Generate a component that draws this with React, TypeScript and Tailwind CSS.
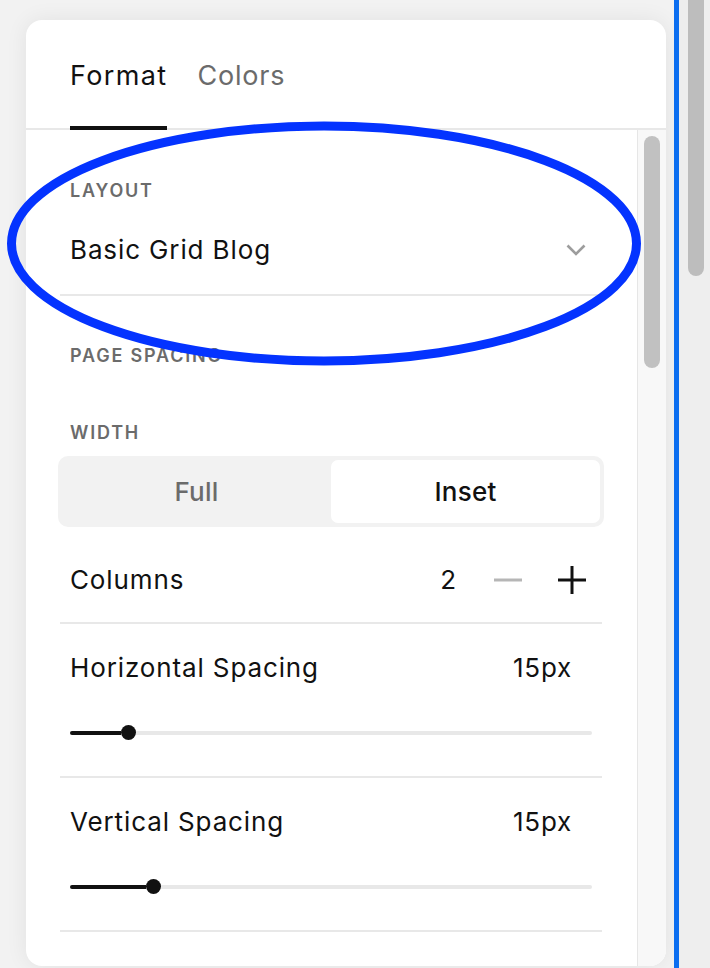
import React from "react";

function Label({ children, className = "" }: { children: React.ReactNode; className?: string }) {
  return (
    <div className={`px-[10px] text-[18px] leading-none font-semibold tracking-[0.1em] text-[#6b6b6b] ${className}`}>
      {children}
    </div>
  );
}

function Slider({ fill }: { fill: number }) {
  return (
    <div className="mt-[44px] px-[10px] flex items-center h-[15px]">
      <div className="h-[4px] bg-[#111] rounded-l-full" style={{ width: fill }} />
      <div className="w-[15px] h-[15px] rounded-full bg-[#111] flex-none" />
      <div className="h-[4px] flex-1 bg-[#e8e8e8] rounded-r-full" />
    </div>
  );
}

function SpacingSection({ title, value, fill }: { title: string; value: string; fill: number }) {
  return (
    <div className="pt-[31px] pb-[36px] border-b-2 border-[#e8e8e8]">
      <div className="px-[10px] flex items-center justify-between">
        <span className="text-[26px] leading-none text-[#111]">{title}</span>
        <span className="text-[26px] leading-none text-[#111] mr-[20px] tracking-[0.03em]">{value}</span>
      </div>
      <Slider fill={fill} />
    </div>
  );
}

export default function App() {
  return (
    <div className="w-[710px] h-[968px] bg-black overflow-hidden relative font-['Inter','Noto_Sans',sans-serif] tracking-[0.055em]">
      <div className="w-full h-full bg-[#f2f2f2] rounded-br-[22px] flex">
        <div className="pl-[26px] pt-[20px] flex-none">
          <div className="w-[640px] h-[946px] bg-white rounded-[16px] shadow-[0_0_22px_rgba(0,0,0,0.07)] overflow-hidden flex flex-col">
            {/* Header tabs */}
            <div className="flex gap-[30px] px-[44px] pt-[42px] border-b-2 border-[#e8e8e8]">
              <div className="text-[27px] leading-none text-[#111] pb-[37px] border-b-4 border-[#111] -mb-[2px] tracking-[0.05em]">
                Format
              </div>
              <div className="text-[27px] leading-none text-[#6b6b6b] pb-[37px] border-b-4 border-transparent -mb-[2px] tracking-[0.03em]">
                Colors
              </div>
            </div>
            {/* Body */}
            <div className="flex flex-1 min-h-0">
              <div className="flex-1 pl-[34px] pr-[35px] flex flex-col">
                {/* Layout select */}
                <div className="pt-[52px] pb-[31px] border-b-2 border-[#e8e8e8]">
                  <Label>LAYOUT</Label>
                  <div className="mt-[37px] px-[10px] flex items-center justify-between">
                    <span className="text-[26px] leading-none text-[#111]">Basic Grid Blog</span>
                    <svg width="20" height="12" viewBox="0 0 20 12" className="mr-[6px]">
                      <polyline points="1.5,1.5 10,10 18.5,1.5" fill="none" stroke="#9d9d9d" strokeWidth="2.6" />
                    </svg>
                  </div>
                </div>
                <Label className="mt-[51px]">PAGE SPACING</Label>
                <Label className="mt-[59px]">WIDTH</Label>
                {/* Segmented control */}
                <div className="mt-[14px] -mx-[2px] h-[71px] p-[4px] rounded-[10px] bg-[#f2f2f2] flex">
                  <div className="flex-1 flex items-center justify-center text-[26px] leading-none font-medium text-[#6b6b6b] tracking-[0.01em]">
                    Full
                  </div>
                  <div className="flex-1 flex items-center justify-center rounded-[7px] bg-white text-[26px] leading-none font-medium text-[#111] tracking-[0.01em]">
                    Inset
                  </div>
                </div>
                {/* Columns */}
                <div className="mt-[39px] pb-[28px] border-b-2 border-[#e8e8e8]">
                  <div className="px-[10px] flex items-center h-[28px]">
                    <span className="flex-1 text-[26px] leading-none text-[#111]">Columns</span>
                    <span className="text-[26px] leading-none text-[#111] tracking-normal">2</span>
                    <svg width="28" height="28" viewBox="0 0 28 28" className="ml-[38px]">
                      <line x1="0" y1="14" x2="28" y2="14" stroke="#b6b6b6" strokeWidth="3" />
                    </svg>
                    <svg width="28" height="28" viewBox="0 0 28 28" className="ml-[36px] mr-[6px]">
                      <line x1="0" y1="14" x2="28" y2="14" stroke="#111" strokeWidth="3" />
                      <line x1="14" y1="0" x2="14" y2="28" stroke="#111" strokeWidth="3" />
                    </svg>
                  </div>
                </div>
                <SpacingSection title="Horizontal Spacing" value="15px" fill={51} />
                <SpacingSection title="Vertical Spacing" value="15px" fill={76} />
              </div>
              {/* Scroll track */}
              <div className="w-[29px] flex-none border-l border-[#e6e6e6] bg-[#f8f8f8] pl-[6px] pt-[6px]">
                <div className="w-[16px] h-[232px] rounded-full bg-[#c1c1c1]" />
              </div>
            </div>
          </div>
        </div>
        <div className="w-[8px] flex-none" />
        <div className="w-[5px] flex-none bg-[#0b6ef0]" />
        <div className="flex-1 pl-[9px] bg-[#eeeeee]">
          <div className="w-[16px] h-[286px] -mt-[10px] rounded-full bg-[#bdbdbd]" />
        </div>
      </div>
      {/* Hand-drawn annotation ellipse */}
      <svg className="absolute inset-0 pointer-events-none" width="710" height="968" viewBox="0 0 710 968">
        <ellipse cx="324" cy="243.5" rx="312.5" ry="117.5" fill="none" stroke="#0433ff" strokeWidth="9" />
      </svg>
    </div>
  );
}
